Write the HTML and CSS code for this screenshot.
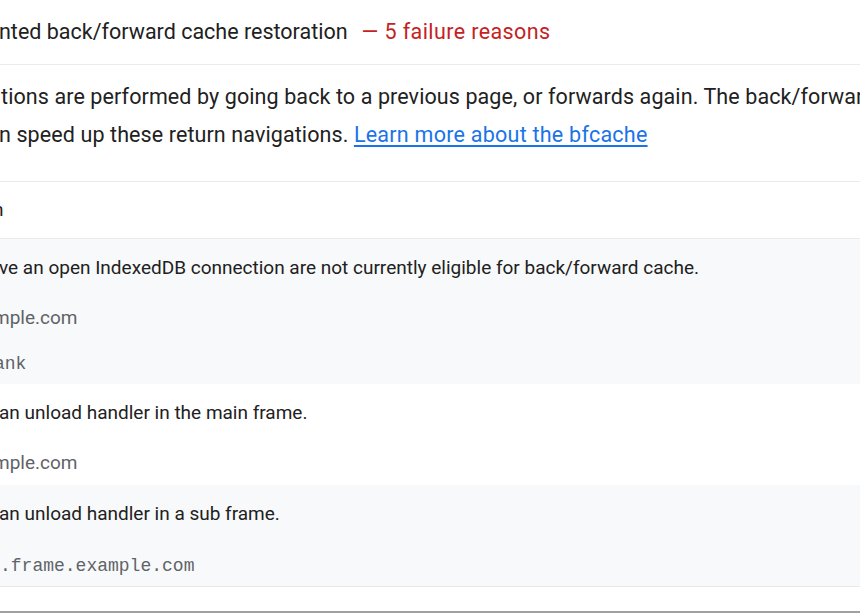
FILE: index.html
```html
<!DOCTYPE html>
<html lang="en">
<head>
<meta charset="utf-8">
<title>bfcache audit</title>
<link rel="stylesheet" href="styles.css">
</head>
<body>
<div class="audit">
  <div class="audit-title">
    <span class="title-text">nted back/forward cache restoration</span>
    <span class="title-fail">— 5 failure reasons</span>
  </div>
  <div class="audit-desc">
    <p class="desc-line">tions are performed by going back to a previous page, or forwards again. The back/forward cache (bfcache) can</p>
    <p class="desc-line desc-line-2">n speed up these return navigations. <a class="desc-link" href="#">Learn more about the bfcache</a></p>
  </div>
  <div class="table">
    <div class="table-head"><span class="head-text">n</span></div>
    <div class="row row-alt">
      <div class="reason">ve an open IndexedDB connection are not currently eligible for back/forward cache.</div>
      <div class="sub sub-url">mple.com</div>
      <div class="sub sub-mono sub-next">ank</div>
    </div>
    <div class="row">
      <div class="reason">an unload handler in the main frame.</div>
      <div class="sub sub-url">mple.com</div>
    </div>
    <div class="row row-alt row-last">
      <div class="reason">an unload handler in a sub frame.</div>
      <div class="sub sub-mono">.frame.example.com</div>
    </div>
  </div>
  <div class="audit-end"></div>
</div>
</body>
</html>
```

FILE: styles.css
```css
html, body {
  margin: 0;
  padding: 0;
  background: #ffffff;
}

body {
  width: 860px;
  height: 614px;
  overflow: hidden;
  font-family: Roboto, "Liberation Sans", sans-serif;
  color: #212121;
}

.audit {
  display: flex;
  flex-direction: column;
}

.audit-title {
  display: flex;
  align-items: center;
  gap: 14px;
  height: 65px;
  box-sizing: border-box;
  border-bottom: 1px solid #ebebeb;
  font-size: 21.5px;
  line-height: 28px;
  white-space: nowrap;
}

.title-text {
  margin-left: -1px;
}

.title-fail {
  color: #c5221f;
  letter-spacing: 0.4px;
}

.audit-desc {
  padding: 13px 0 27px;
  font-size: 21.5px;
  line-height: 38px;
  color: #212121;
  white-space: nowrap;
}

.desc-line {
  margin: 0;
  padding-left: 1px;
  letter-spacing: 0.1px;
}

.desc-line-2 {
  margin-left: -2px;
}

.desc-link {
  color: #1a73e8;
  text-decoration: underline;
  text-underline-offset: 3px;
  letter-spacing: 0.25px;
}

.table {
  display: flex;
  flex-direction: column;
  font-size: 19px;
  line-height: 22px;
}

.table-head {
  display: flex;
  align-items: center;
  border-top: 1px solid #ebebeb;
  border-bottom: 1px solid #ebebeb;
  box-sizing: border-box;
  height: 58px;
}

.head-text {
  margin-left: -7px;
}

.row {
  padding: 18px 0 11px;
  white-space: nowrap;
}

.row-alt {
  background: #f8f9fa;
}

.row-last {
  border-bottom: 1px solid #e8e8e8;
}

.reason {
  margin-left: -1px;
}

.sub {
  margin-top: 28px;
  color: #5f6368;
}

.sub-url {
  margin-left: -7px;
}

.sub-mono {
  font-family: "Liberation Mono", "DejaVu Sans Mono", monospace;
  font-size: 18px;
  margin-top: 30px;
  margin-bottom: -2px;
  margin-left: 0;
}

.sub-mono.sub-next {
  margin-top: 24px;
  margin-left: -6px;
}

.audit-end {
  margin-top: 24px;
  border-top: 2px solid #a0a0a0;
}
```
